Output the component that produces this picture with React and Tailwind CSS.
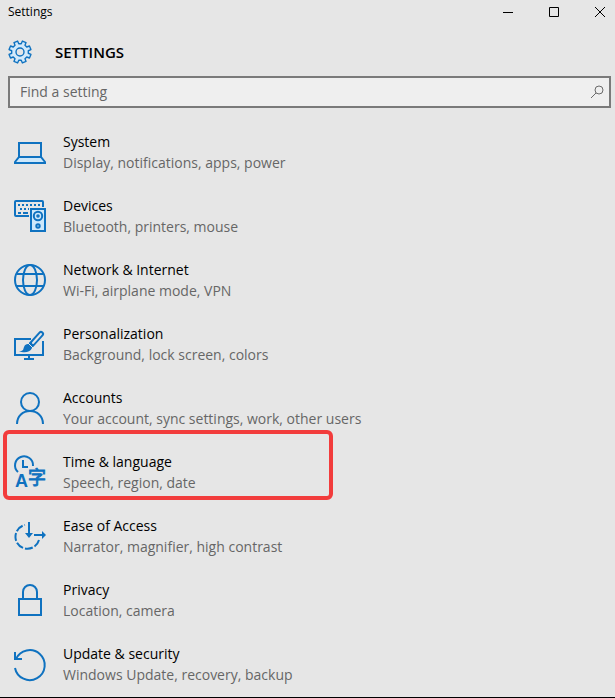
const LaptopIcon = () => (
    <>
        <rect x="5" y="7" width="22" height="14" />
        <path d="M5 21h22l4 5v1H1v-1z" fill="#cde8fb" />
    </>
);

const DevicesIcon = () => (
    <>
        <path d="M15 16H2a1 1 0 0 1-1-1V2a1 1 0 0 1 1-1h26a1 1 0 0 1 1 1v5" />
        <path d="M4 5h23" strokeDasharray="2 2" />
        <path d="M6 9h9" strokeDasharray="2 2" />
        <path d="M4 13h3M9 13h5" />
        <rect x="17" y="9" width="14" height="22" fill="#cde8fb" />
        <circle cx="24" cy="16" r="4.2" />
        <circle cx="24" cy="16" r=".8" />
        <circle cx="24" cy="26" r="1.7" />
    </>
);

const GlobeIcon = () => (
    <>
        <circle cx="16" cy="16" r="15" />
        <ellipse cx="16" cy="16" rx="7" ry="15" />
        <path d="M3 10h26M3 22h26" />
    </>
);

const PersonalizationIcon = () => (
    <>
        <path d="M17 11H1v16h28V13" />
        <path d="M15 27v4M10 31h10" />
        <path d="M27 6L17 17" strokeWidth="6" strokeLinecap="round" />
        <path d="M27 6L19 15" stroke="#e6e6e6" strokeLinecap="round" />
        <path d="M14 16c-4 0-4 4-5 6-1 1-2 1-4 1 4 2 11 2 13-3z" fill="#0f72c0" stroke="none" />
        <path d="M14 15l5 5" stroke="#e6e6e6" strokeWidth="1" />
    </>
);

const AccountsIcon = () => (
    <>
        <circle cx="16" cy="10" r="9" />
        <path d="M3 32c0-8 6-13 13-13s13 5 13 13" />
    </>
);

const TimeLanguageIcon = () => (
    <>
        <path d="M4 16A9 9 0 1 1 19 10" />
        <path d="M9 4v7h5" />
        <text x="1" y="31" fontSize="18" fontWeight="700" fill="#0f72c0" stroke="none" className="font-['Liberation_Sans',sans-serif]">A</text>
        <text x="14" y="28" fontSize="18" fill="#0f72c0" strokeWidth=".8">字</text>
    </>
);

const EaseOfAccessIcon = () => (
    <>
        <path d="M25 20A12 12 0 1 1 11 5" strokeDasharray="8 2" />
        <path d="M15 2v12M20 15h9" />
        <path d="M11 13h8l-4 5zM28 11v8l4-4z" fill="#0f72c0" stroke="none" />
    </>
);

const PrivacyIcon = () => (
    <>
        <rect x="5" y="15" width="22" height="16" />
        <path d="M9 15V8a7 7 0 0 1 14 0v7" />
    </>
);

const UpdateIcon = () => (
    <>
        <path d="M2 11A15 15 0 1 1 1 20" />
        <path d="M1 4v7h7" />
    </>
);

const categories = [
    { title: 'System', description: 'Display, notifications, apps, power', Icon: LaptopIcon },
    { title: 'Devices', description: 'Bluetooth, printers, mouse', Icon: DevicesIcon },
    { title: 'Network & Internet', description: 'Wi-Fi, airplane mode, VPN', Icon: GlobeIcon },
    { title: 'Personalization', description: 'Background, lock screen, colors', Icon: PersonalizationIcon },
    { title: 'Accounts', description: 'Your account, sync settings, work, other users', Icon: AccountsIcon },
    { title: 'Time & language', description: 'Speech, region, date', Icon: TimeLanguageIcon, highlighted: true },
    { title: 'Ease of Access', description: 'Narrator, magnifier, high contrast', Icon: EaseOfAccessIcon },
    { title: 'Privacy', description: 'Location, camera', Icon: PrivacyIcon },
    { title: 'Update & security', description: 'Windows Update, recovery, backup', Icon: UpdateIcon },
];

// Eight-toothed cog outline, built around a 24px box
const gearPath = Array.from({ length: 8 }, (_, i) => {
    const at = (deg, r) => {
        const a = ((i * 45 + deg + 22.5) * Math.PI) / 180;
        return `${(12 + r * Math.cos(a)).toFixed(2)} ${(12 + r * Math.sin(a)).toFixed(2)}`;
    };
    return `${i === 0 ? 'M' : 'L'}${at(-14, 8.4)}L${at(-10, 11.2)}L${at(10, 11.2)}L${at(14, 8.4)}`;
}).join('') + 'Z';

const TitleBar = () => (
    <header className="flex h-6 items-center justify-between pl-2">
        <span className="text-xs text-black">Settings</span>
        <div className="flex">
            <button type="button" aria-label="Minimize" className="flex h-6 w-[46px] items-center justify-center">
                <svg className="h-[10px] w-[10px]" viewBox="0 0 10 10" stroke="black" shapeRendering="crispEdges">
                    <path d="M0 5.5h10" />
                </svg>
            </button>
            <button type="button" aria-label="Maximize" className="flex h-6 w-[46px] items-center justify-center">
                <svg className="h-[10px] w-[10px]" viewBox="0 0 10 10" fill="none" stroke="black">
                    <path d="M.5.5h9v9h-9z" />
                </svg>
            </button>
            <button type="button" aria-label="Close" className="flex h-6 w-[38px] items-center justify-end pr-[10px]">
                <svg className="h-[10px] w-[10px]" viewBox="0 0 10 10" stroke="black">
                    <path d="M0 0l10 10M10 0L0 10" />
                </svg>
            </button>
        </div>
    </header>
);

const CategoryRow = ({ title, description, Icon, highlighted }) => (
    <li className="relative">
        <a href="#" className="flex h-16 items-center gap-4 pl-[14px]">
            <svg className="h-8 w-8 shrink-0 overflow-visible" viewBox="0 0 32 32" fill="none" stroke="#0f72c0" strokeWidth="2">
                <Icon />
            </svg>
            <span className="flex flex-col pl-px text-sm leading-[21px]">
                <span className="text-black">{title}</span>
                <span className="text-[#666666]">{description}</span>
            </span>
        </a>
        {highlighted && (
            <div className="pointer-events-none absolute -top-[10px] bottom-1 left-[3px] w-[330px] rounded-md border-4 border-[#f23c3c]" />
        )}
    </li>
);

const App = () => {
    return (
        <div className="min-h-screen border-b border-black bg-[#e6e6e6] font-['Open_Sans','Noto_Sans_CJK_SC',sans-serif]">
            <TitleBar />

            <main>
                <div className="flex h-[52px] items-center gap-[23px] pt-1 pl-2">
                    <svg className="h-6 w-6" viewBox="0 0 24 24" fill="#d3eafb" stroke="#0f72c0" strokeWidth="1.4">
                        <path d={gearPath} strokeLinejoin="round" />
                        <circle cx="12" cy="12" r="4" fill="#e6e6e6" />
                    </svg>
                    <h1 className="text-[15px] font-semibold text-black">SETTINGS</h1>
                </div>

                {/* Search box */}
                <div className="mr-1 ml-2 flex h-8 items-center border-2 border-[#7a7a7a] bg-[#efefef] pr-[5px] pl-[10px]">
                    <input
                        type="text"
                        aria-label="Find a setting"
                        placeholder="Find a setting"
                        className="min-w-0 flex-1 bg-transparent text-sm text-black outline-none placeholder:text-[#666666]"
                    />
                    <button type="button" aria-label="Search">
                        <svg className="h-[14px] w-[14px]" viewBox="0 0 14 14" fill="none" stroke="#6a6a6a">
                            <circle cx="9" cy="5" r="4" />
                            <path d="M6 8l-5 5" />
                        </svg>
                    </button>
                </div>

                <ul className="pt-3">
                    {categories.map((category) => (
                        <CategoryRow key={category.title} {...category} />
                    ))}
                </ul>
            </main>
        </div>
    );
};

export default App;
